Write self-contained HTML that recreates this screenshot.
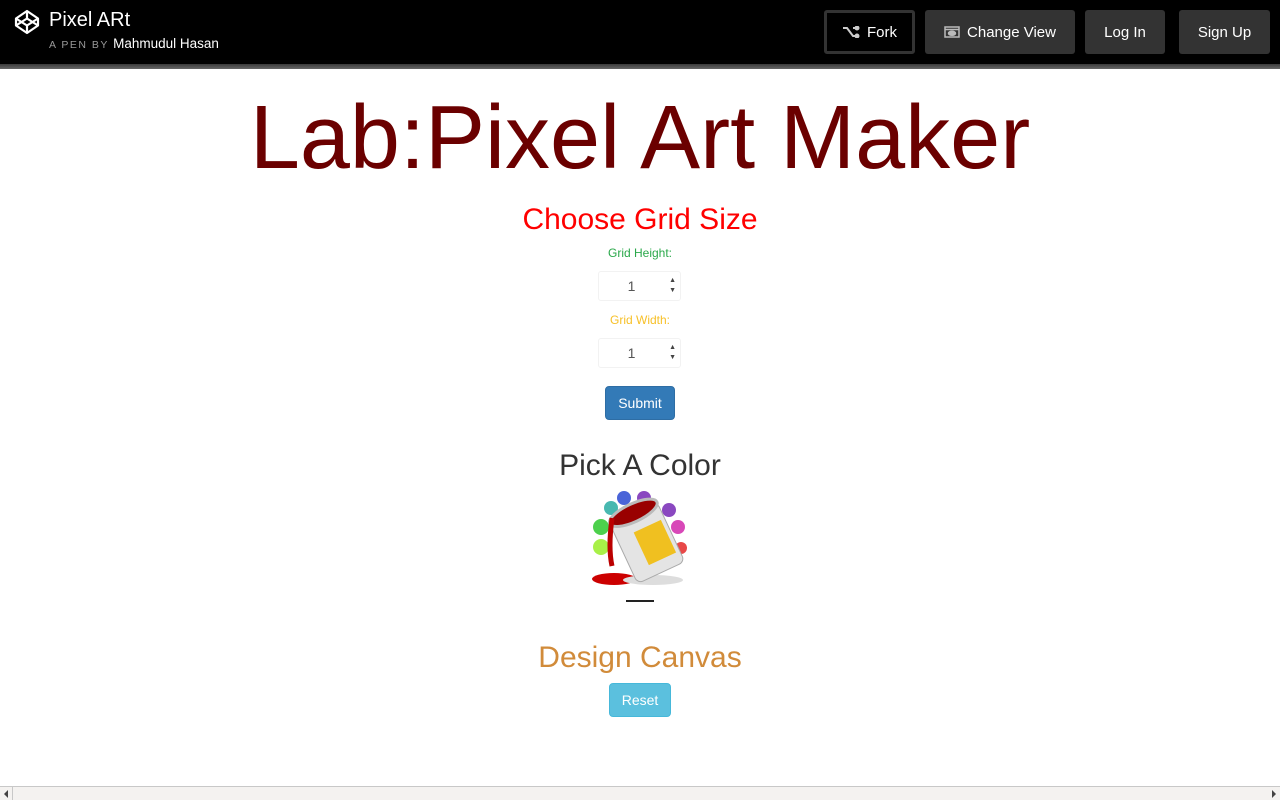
<!DOCTYPE html>
<html><head><meta charset="utf-8"><style>
*{box-sizing:border-box;margin:0;padding:0}
html,body{width:1280px;height:800px;overflow:hidden;background:#fff;font-family:"Liberation Sans",Arial,sans-serif}
.hdr{position:absolute;left:0;top:0;width:1280px;height:64px;background:#000}
.hbar{position:absolute;left:0;top:64px;width:1280px;height:5px;background:linear-gradient(#3a3a3a,#666)}
.logo{position:absolute;left:14px;top:9px}
.t1{position:absolute;left:49px;top:9px;color:#fff;font-size:20px}
.t2{position:absolute;left:49px;top:36px;color:#999;font-size:10.5px;letter-spacing:1.5px}
.t2 b{font-weight:normal;color:#fff;font-size:13.5px;letter-spacing:0}
.btn{position:absolute;top:10px;height:44px;background:#333;color:#fff;font-size:15px;border-radius:3px;display:flex;align-items:center;justify-content:center;gap:7px}
.c{position:absolute;left:0;width:1280px;text-align:center;white-space:nowrap}
.inp{position:absolute;left:598px;width:83px;height:30px;border:1px solid #f2f2f2;border-radius:3px;font-size:14px;color:#555;text-align:center;line-height:28px;padding-right:16px}
.inp span{position:absolute;right:4px;top:4px;font-size:7px;line-height:10px;color:#444}
.sb{position:absolute;left:0;top:786px;width:1280px;height:14px;background:#f4f2f0;border-top:1px solid #c8c8c8}
</style></head><body>
<div class="hdr"></div><div class="hbar"></div>
<svg class="logo" width="26" height="26" viewBox="0 0 26 26" fill="none" stroke="#fff" stroke-width="2.2" stroke-linejoin="round"><path d="M13 2 24 9.5V16.5L13 24 2 16.5V9.5Z"/><path d="M2 9.5 13 16.5 24 9.5M2 16.5 13 9.5 24 16.5M13 2V9.5M13 16.5V24"/></svg>
<div class="t1">Pixel ARt</div>
<div class="t2">A PEN BY <b>Mahmudul Hasan</b></div>
<div class="btn" style="left:824px;width:91px;background:#000;border:3px solid #333">
<svg width="18" height="12" viewBox="0 0 18 12" fill="none" stroke="#ccc" stroke-width="2"><path d="M1 2h4l6 8h4M11 2h4"/><circle cx="15" cy="2" r="1.5" fill="#ccc"/><circle cx="15" cy="10" r="1.5" fill="#ccc"/></svg>Fork</div>
<div class="btn" style="left:925px;width:150px"><svg width="16" height="12" viewBox="0 0 16 12" fill="none" stroke="#bbb" stroke-width="1.5"><rect x="1" y="1" width="14" height="10"/><path d="M1 3.5h14"/><ellipse cx="8" cy="7.3" rx="3.5" ry="2" fill="#bbb"/></svg>Change View</div>
<div class="btn" style="left:1085px;width:80px">Log In</div>
<div class="btn" style="left:1179px;width:91px">Sign Up</div>

<div class="c" style="top:86px;font-size:90px;color:#6b0000;line-height:104px">Lab:Pixel Art Maker</div>
<div class="c" style="top:202px;font-size:30px;color:#f00;line-height:36px">Choose Grid Size</div>
<div class="c" style="top:246px;font-size:12px;color:#2aa84a">Grid Height:</div>
<div class="inp" style="top:271px">1<span>▲<br>▼</span></div>
<div class="c" style="top:313px;font-size:12px;color:#f7c028">Grid Width:</div>
<div class="inp" style="top:338px">1<span>▲<br>▼</span></div>
<div style="position:absolute;left:605px;top:386px;width:70px;height:34px;background:#337ab7;border:1px solid #2e6da4;border-radius:4px;color:#fff;font-size:14px;text-align:center;line-height:32px">Submit</div>
<div class="c" style="top:448px;font-size:30px;color:#333;line-height:36px">Pick A Color</div>
<svg style="position:absolute;left:588px;top:488px" width="104" height="102" viewBox="0 0 104 102">
<circle cx="36" cy="10" r="7" fill="#4a64d8"/><circle cx="56" cy="10" r="7" fill="#8a48c0"/><circle cx="23" cy="20" r="7" fill="#48b8b0"/><circle cx="81" cy="22" r="7" fill="#8a48c0"/><circle cx="13" cy="39" r="8" fill="#4cd04c"/><circle cx="90" cy="39" r="7" fill="#d848b8"/><circle cx="13" cy="59" r="8" fill="#a8f048"/><circle cx="93" cy="60" r="6" fill="#e84848"/>
<ellipse cx="26" cy="91" rx="22" ry="6" fill="#c00"/>
<ellipse cx="65" cy="92" rx="30" ry="5" fill="#ddd"/>
<g transform="rotate(-25 58 52)"><rect x="32" y="22" width="52" height="66" rx="6" fill="#e4e4e4" stroke="#aaa"/><rect x="50" y="40" width="30" height="36" fill="#f0c020"/><ellipse cx="58" cy="22" rx="26" ry="9" fill="#900" stroke="#bbb" stroke-width="3"/></g>
<path d="M24 30 Q20 60 24 78" stroke="#b00" stroke-width="5" fill="none"/>
</svg>
<div style="position:absolute;left:626px;top:600px;width:28px;height:2px;background:#222"></div>
<div class="c" style="top:640px;font-size:30px;color:#d18b3a;line-height:36px">Design Canvas</div>
<div style="position:absolute;left:609px;top:683px;width:62px;height:34px;background:#5bc0de;border:1px solid #46b8da;border-radius:4px;color:#fff;font-size:14px;text-align:center;line-height:32px">Reset</div>
<div class="sb"><div style="position:absolute;left:0;top:0;width:13px;height:13px;border-right:1px solid #c8c8c8"></div><div style="position:absolute;left:4px;top:3px;border:4px solid transparent;border-right:4px solid #444;border-left:0"></div><div style="position:absolute;right:4px;top:3px;border:4px solid transparent;border-left:4px solid #444;border-right:0"></div></div>
</body></html>
